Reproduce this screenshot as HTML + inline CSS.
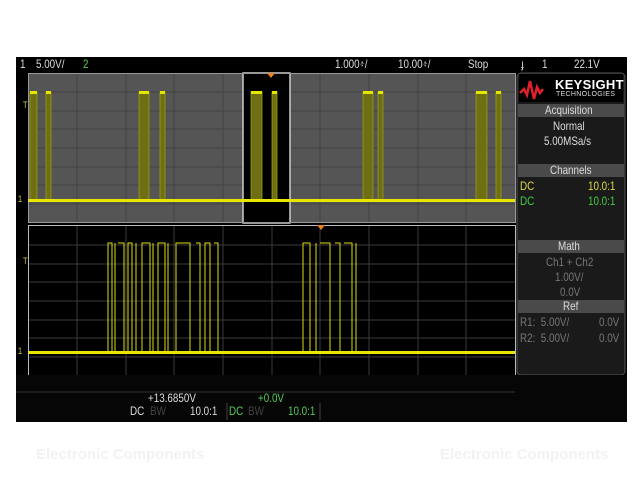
<!DOCTYPE html>
<html><head><style>
body{margin:0;width:640px;height:480px;background:#fff;overflow:hidden;position:relative;font-family:"Liberation Sans",sans-serif;}
.t{position:absolute;font-size:12px;white-space:nowrap;transform:scaleX(0.82);transform-origin:0 0;}
</style></head><body>
<div style="position:absolute;left:36px;top:446px;font-size:15px;font-weight:bold;color:#f2f2f2">Electronic Components</div>
<div style="position:absolute;left:440px;top:446px;font-size:15px;font-weight:bold;color:#f2f2f2">Electronic Components</div>
<svg width="640" height="480" style="position:absolute;left:0;top:0">
<rect x="16" y="57" width="611" height="365" fill="#000"/>
<rect x="28" y="73" width="487" height="150" fill="#555"/>
<g stroke="#444" stroke-width="1">
<path d="M77 73V223M126 73V223M174 73V223M223 73V223M272 73V223M320 73V223M369 73V223M418 73V223M466 73V223M28 92H515M28 111H515M28 129H515M28 148H515M28 167H515M28 185H515M28 204H515"/>
</g>
<rect x="243" y="73" width="47" height="150" fill="#000" stroke="#ccc" stroke-width="1.5"/>
<rect x="28.5" y="73.5" width="487" height="149" fill="none" stroke="#999"/>
<g fill="#6e6e12" stroke="#9a9a18" stroke-width="0.8">
<rect x="30" y="92" width="7" height="108"/><rect x="46" y="92" width="5" height="108"/>
<rect x="139" y="92" width="10" height="108"/><rect x="160" y="92" width="5" height="108"/>
<rect x="251" y="92" width="11" height="108"/><rect x="272" y="92" width="5" height="108"/>
<rect x="363" y="92" width="10" height="108"/><rect x="378" y="92" width="5" height="108"/>
<rect x="476" y="92" width="11" height="108"/><rect x="496" y="92" width="5" height="108"/>
</g>
<g fill="#e6e600">
<rect x="30" y="91" width="7" height="3"/><rect x="46" y="91" width="5" height="3"/>
<rect x="139" y="91" width="10" height="3"/><rect x="160" y="91" width="5" height="3"/>
<rect x="251" y="91" width="11" height="3"/><rect x="272" y="91" width="5" height="3"/>
<rect x="363" y="91" width="10" height="3"/><rect x="378" y="91" width="5" height="3"/>
<rect x="476" y="91" width="11" height="3"/><rect x="496" y="91" width="5" height="3"/>
</g>
<rect x="28" y="199" width="487" height="3" fill="#e6e600"/>
<path d="M267 73l4 5 4-5z" fill="#f08020"/>
<g stroke="#3a3a3a" stroke-width="1">
<path d="M77 226V376M126 226V376M174 226V376M223 226V376M272 226V376M320 226V376M369 226V376M418 226V376M466 226V376M28 245H515M28 264H515M28 282H515M28 301H515M28 320H515M28 338H515M28 357H515"/>
</g>
<rect x="28.5" y="225.5" width="487" height="150" fill="none" stroke="#bbb"/>
<path d="M317 225l4 5 4-5z" fill="#f08020"/>
<path fill="none" stroke="#dddd10" stroke-width="1" d="M108 352V243H112V352M115 243V352M118 243H124V352M128 352V243H132V352M136 243V352M142 352V243H150V352M153 243V352M158 352V243H165V352M168 243V352M176 352V243H190V352M196 243H200V352M205 352V243H210V352M214 243H218V352M303 352V243H310V352M316 243V352M320 243H330V352M335 243H340V352M344 243H352V352M356 243V352"/>
<rect x="28" y="351" width="487" height="3" fill="#e6e600"/>
<rect x="517" y="73" width="108" height="302" rx="4" fill="#1a1a1a" stroke="#555"/>
<rect x="519" y="74" width="104" height="28" fill="#000"/>
<path d="M520 93l4-4 3 6 3-14 4 18 3-12 3 6 3-4" fill="none" stroke="#e0202a" stroke-width="2.5"/>
<rect x="518" y="104" width="106" height="13" fill="#4a4a4a"/>
<rect x="518" y="164" width="106" height="13" fill="#4a4a4a"/>
<rect x="518" y="240" width="106" height="13" fill="#4a4a4a"/>
<rect x="518" y="300" width="106" height="13" fill="#4a4a4a"/>
<rect x="16" y="375" width="611" height="47" fill="#060606"/>
<path d="M16 392H515" stroke="#333"/>
<path d="M227 403V420M320 403V420" stroke="#444"/>
</svg>
<div class="t" style="left:20px;top:57px;color:#ddd">1</div>
<div class="t" style="left:36px;top:57px;color:#ddd">5.00V/</div>
<div class="t" style="left:83px;top:57px;color:#5c5">2</div>
<div class="t" style="left:335px;top:57px;color:#ddd">1.000፥/</div>
<div class="t" style="left:398px;top:57px;color:#ddd">10.00፥/</div>
<div class="t" style="left:468px;top:57px;color:#ddd">Stop</div>
<div class="t" style="left:521px;top:57px;color:#ddd">ɟ</div>
<div class="t" style="left:542px;top:57px;color:#ddd">1</div>
<div class="t" style="left:574px;top:57px;color:#ddd">22.1V</div>
<div style="position:absolute;left:555px;top:77px;color:#fff;font-size:13px;font-weight:bold;letter-spacing:0.3px">KEYSIGHT</div>
<div style="position:absolute;left:556px;top:91px;color:#ddd;font-size:7px;letter-spacing:0.3px">TECHNOLOGIES</div>
<div class="t" style="left:545px;top:103px;color:#ddd">Acquisition</div>
<div class="t" style="left:553px;top:119px;color:#ddd">Normal</div>
<div class="t" style="left:544px;top:134px;color:#ddd">5.00MSa/s</div>
<div class="t" style="left:550px;top:163px;color:#ddd">Channels</div>
<div class="t" style="left:520px;top:179px;color:#dd4">DC</div>
<div class="t" style="left:588px;top:179px;color:#dd4">10.0:1</div>
<div class="t" style="left:520px;top:194px;color:#4c4">DC</div>
<div class="t" style="left:588px;top:194px;color:#4c4">10.0:1</div>
<div class="t" style="left:558px;top:239px;color:#ddd">Math</div>
<div class="t" style="left:546px;top:255px;color:#777">Ch1 + Ch2</div>
<div class="t" style="left:555px;top:270px;color:#777">1.00V/</div>
<div class="t" style="left:560px;top:285px;color:#777">0.0V</div>
<div class="t" style="left:563px;top:299px;color:#ddd">Ref</div>
<div class="t" style="left:520px;top:315px;color:#777">R1:&nbsp; 5.00V/</div>
<div class="t" style="left:599px;top:315px;color:#777">0.0V</div>
<div class="t" style="left:520px;top:331px;color:#777">R2:&nbsp; 5.00V/</div>
<div class="t" style="left:599px;top:331px;color:#777">0.0V</div>
<div class="t" style="left:23px;top:100px;color:#cc4;font-size:9px">T</div>
<div class="t" style="left:23px;top:256px;color:#cc4;font-size:9px">T</div>
<div class="t" style="left:18px;top:194px;color:#cc4;font-size:9px">1</div>
<div class="t" style="left:18px;top:346px;color:#cc4;font-size:9px">1</div>
<div class="t" style="left:148px;top:391px;color:#ddd">+13.6850V</div>
<div class="t" style="left:258px;top:391px;color:#5c5">+0.0V</div>
<div class="t" style="left:130px;top:404px;color:#ddd">DC</div>
<div class="t" style="left:150px;top:404px;color:#444">BW</div>
<div class="t" style="left:190px;top:404px;color:#ddd">10.0:1</div>
<div class="t" style="left:229px;top:404px;color:#5c5">DC</div>
<div class="t" style="left:248px;top:404px;color:#444">BW</div>
<div class="t" style="left:288px;top:404px;color:#5c5">10.0:1</div>
</body></html>
